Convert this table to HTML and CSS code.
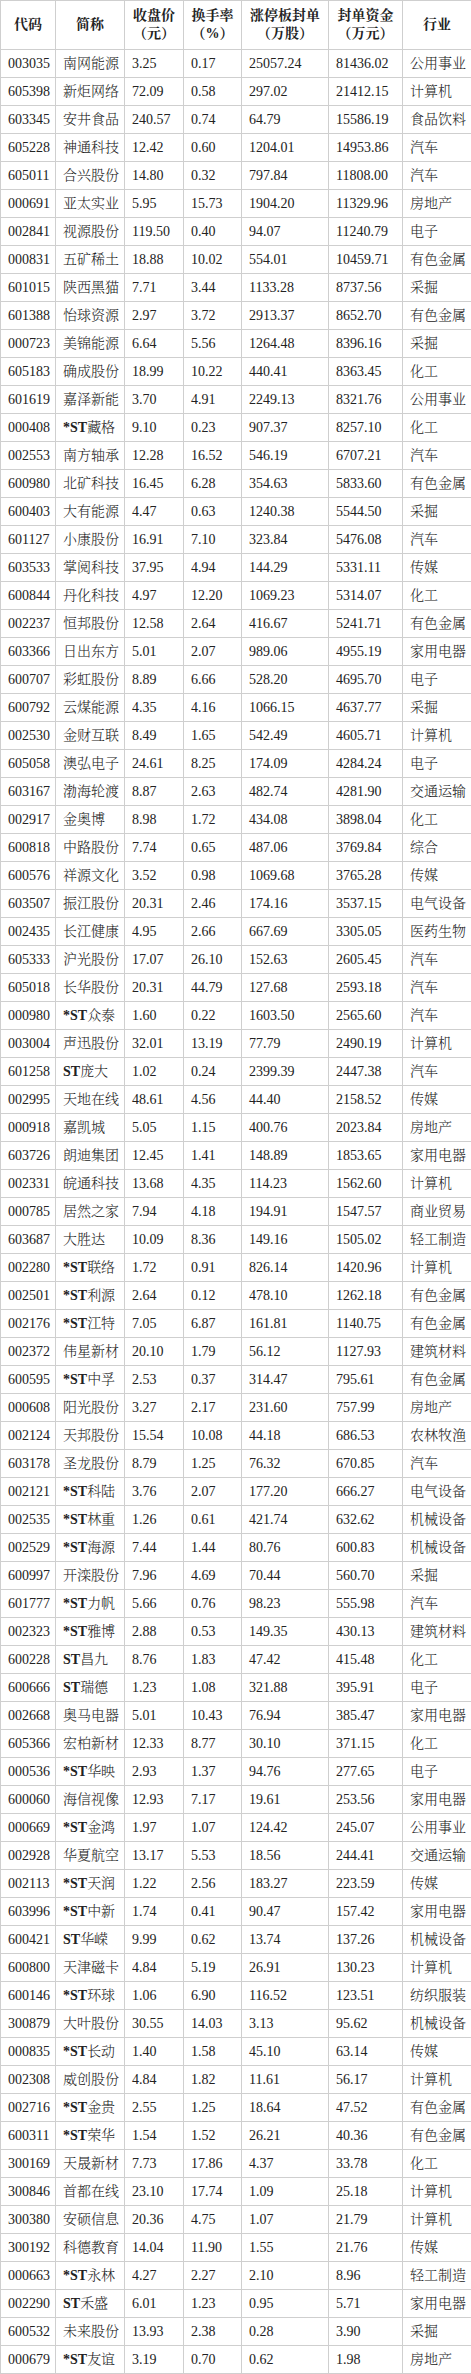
FILE: index.html
```html
<!DOCTYPE html>
<html lang="zh-CN">
<head>
<meta charset="utf-8">
<title>涨停板封单</title>
<link rel="stylesheet" href="styles.css">
</head>
<body>
<table class="grid">
<colgroup>
<col class="c-code"><col class="c-name"><col class="c-price"><col class="c-turn"><col class="c-seal"><col class="c-fund"><col class="c-ind">
</colgroup>
<thead>
<tr><th>代码</th><th>简称</th><th>收盘价<br>（元）</th><th>换手率<br>（%）</th><th>涨停板封单<br>（万股）</th><th>封单资金<br>（万元）</th><th>行业</th></tr>
</thead>
<tbody>
<tr><td>003035</td><td>南网能源</td><td>3.25</td><td>0.17</td><td>25057.24</td><td>81436.02</td><td>公用事业</td></tr>
<tr><td>605398</td><td>新炬网络</td><td>72.09</td><td>0.58</td><td>297.02</td><td>21412.15</td><td>计算机</td></tr>
<tr><td>603345</td><td>安井食品</td><td>240.57</td><td>0.74</td><td>64.79</td><td>15586.19</td><td>食品饮料</td></tr>
<tr><td>605228</td><td>神通科技</td><td>12.42</td><td>0.60</td><td>1204.01</td><td>14953.86</td><td>汽车</td></tr>
<tr><td>605011</td><td>合兴股份</td><td>14.80</td><td>0.32</td><td>797.84</td><td>11808.00</td><td>汽车</td></tr>
<tr><td>000691</td><td>亚太实业</td><td>5.95</td><td>15.73</td><td>1904.20</td><td>11329.96</td><td>房地产</td></tr>
<tr><td>002841</td><td>视源股份</td><td>119.50</td><td>0.40</td><td>94.07</td><td>11240.79</td><td>电子</td></tr>
<tr><td>000831</td><td>五矿稀土</td><td>18.88</td><td>10.02</td><td>554.01</td><td>10459.71</td><td>有色金属</td></tr>
<tr><td>601015</td><td>陕西黑猫</td><td>7.71</td><td>3.44</td><td>1133.28</td><td>8737.56</td><td>采掘</td></tr>
<tr><td>601388</td><td>怡球资源</td><td>2.97</td><td>3.72</td><td>2913.37</td><td>8652.70</td><td>有色金属</td></tr>
<tr><td>000723</td><td>美锦能源</td><td>6.64</td><td>5.56</td><td>1264.48</td><td>8396.16</td><td>采掘</td></tr>
<tr><td>605183</td><td>确成股份</td><td>18.99</td><td>10.22</td><td>440.41</td><td>8363.45</td><td>化工</td></tr>
<tr><td>601619</td><td>嘉泽新能</td><td>3.70</td><td>4.91</td><td>2249.13</td><td>8321.76</td><td>公用事业</td></tr>
<tr><td>000408</td><td><span class="st">*ST</span>藏格</td><td>9.10</td><td>0.23</td><td>907.37</td><td>8257.10</td><td>化工</td></tr>
<tr><td>002553</td><td>南方轴承</td><td>12.28</td><td>16.52</td><td>546.19</td><td>6707.21</td><td>汽车</td></tr>
<tr><td>600980</td><td>北矿科技</td><td>16.45</td><td>6.28</td><td>354.63</td><td>5833.60</td><td>有色金属</td></tr>
<tr><td>600403</td><td>大有能源</td><td>4.47</td><td>0.63</td><td>1240.38</td><td>5544.50</td><td>采掘</td></tr>
<tr><td>601127</td><td>小康股份</td><td>16.91</td><td>7.10</td><td>323.84</td><td>5476.08</td><td>汽车</td></tr>
<tr><td>603533</td><td>掌阅科技</td><td>37.95</td><td>4.94</td><td>144.29</td><td>5331.11</td><td>传媒</td></tr>
<tr><td>600844</td><td>丹化科技</td><td>4.97</td><td>12.20</td><td>1069.23</td><td>5314.07</td><td>化工</td></tr>
<tr><td>002237</td><td>恒邦股份</td><td>12.58</td><td>2.64</td><td>416.67</td><td>5241.71</td><td>有色金属</td></tr>
<tr><td>603366</td><td>日出东方</td><td>5.01</td><td>2.07</td><td>989.06</td><td>4955.19</td><td>家用电器</td></tr>
<tr><td>600707</td><td>彩虹股份</td><td>8.89</td><td>6.66</td><td>528.20</td><td>4695.70</td><td>电子</td></tr>
<tr><td>600792</td><td>云煤能源</td><td>4.35</td><td>4.16</td><td>1066.15</td><td>4637.77</td><td>采掘</td></tr>
<tr><td>002530</td><td>金财互联</td><td>8.49</td><td>1.65</td><td>542.49</td><td>4605.71</td><td>计算机</td></tr>
<tr><td>605058</td><td>澳弘电子</td><td>24.61</td><td>8.25</td><td>174.09</td><td>4284.24</td><td>电子</td></tr>
<tr><td>603167</td><td>渤海轮渡</td><td>8.87</td><td>2.63</td><td>482.74</td><td>4281.90</td><td>交通运输</td></tr>
<tr><td>002917</td><td>金奥博</td><td>8.98</td><td>1.72</td><td>434.08</td><td>3898.04</td><td>化工</td></tr>
<tr><td>600818</td><td>中路股份</td><td>7.74</td><td>0.65</td><td>487.06</td><td>3769.84</td><td>综合</td></tr>
<tr><td>600576</td><td>祥源文化</td><td>3.52</td><td>0.98</td><td>1069.68</td><td>3765.28</td><td>传媒</td></tr>
<tr><td>603507</td><td>振江股份</td><td>20.31</td><td>2.46</td><td>174.16</td><td>3537.15</td><td>电气设备</td></tr>
<tr><td>002435</td><td>长江健康</td><td>4.95</td><td>2.66</td><td>667.69</td><td>3305.05</td><td>医药生物</td></tr>
<tr><td>605333</td><td>沪光股份</td><td>17.07</td><td>26.10</td><td>152.63</td><td>2605.45</td><td>汽车</td></tr>
<tr><td>605018</td><td>长华股份</td><td>20.31</td><td>44.79</td><td>127.68</td><td>2593.18</td><td>汽车</td></tr>
<tr><td>000980</td><td><span class="st">*ST</span>众泰</td><td>1.60</td><td>0.22</td><td>1603.50</td><td>2565.60</td><td>汽车</td></tr>
<tr><td>003004</td><td>声迅股份</td><td>32.01</td><td>13.19</td><td>77.79</td><td>2490.19</td><td>计算机</td></tr>
<tr><td>601258</td><td><span class="st">ST</span>庞大</td><td>1.02</td><td>0.24</td><td>2399.39</td><td>2447.38</td><td>汽车</td></tr>
<tr><td>002995</td><td>天地在线</td><td>48.61</td><td>4.56</td><td>44.40</td><td>2158.52</td><td>传媒</td></tr>
<tr><td>000918</td><td>嘉凯城</td><td>5.05</td><td>1.15</td><td>400.76</td><td>2023.84</td><td>房地产</td></tr>
<tr><td>603726</td><td>朗迪集团</td><td>12.45</td><td>1.41</td><td>148.89</td><td>1853.65</td><td>家用电器</td></tr>
<tr><td>002331</td><td>皖通科技</td><td>13.68</td><td>4.35</td><td>114.23</td><td>1562.60</td><td>计算机</td></tr>
<tr><td>000785</td><td>居然之家</td><td>7.94</td><td>4.18</td><td>194.91</td><td>1547.57</td><td>商业贸易</td></tr>
<tr><td>603687</td><td>大胜达</td><td>10.09</td><td>8.36</td><td>149.16</td><td>1505.02</td><td>轻工制造</td></tr>
<tr><td>002280</td><td><span class="st">*ST</span>联络</td><td>1.72</td><td>0.91</td><td>826.14</td><td>1420.96</td><td>计算机</td></tr>
<tr><td>002501</td><td><span class="st">*ST</span>利源</td><td>2.64</td><td>0.12</td><td>478.10</td><td>1262.18</td><td>有色金属</td></tr>
<tr><td>002176</td><td><span class="st">*ST</span>江特</td><td>7.05</td><td>6.87</td><td>161.81</td><td>1140.75</td><td>有色金属</td></tr>
<tr><td>002372</td><td>伟星新材</td><td>20.10</td><td>1.79</td><td>56.12</td><td>1127.93</td><td>建筑材料</td></tr>
<tr><td>600595</td><td><span class="st">*ST</span>中孚</td><td>2.53</td><td>0.37</td><td>314.47</td><td>795.61</td><td>有色金属</td></tr>
<tr><td>000608</td><td>阳光股份</td><td>3.27</td><td>2.17</td><td>231.60</td><td>757.99</td><td>房地产</td></tr>
<tr><td>002124</td><td>天邦股份</td><td>15.54</td><td>10.08</td><td>44.18</td><td>686.53</td><td>农林牧渔</td></tr>
<tr><td>603178</td><td>圣龙股份</td><td>8.79</td><td>1.25</td><td>76.32</td><td>670.85</td><td>汽车</td></tr>
<tr><td>002121</td><td><span class="st">*ST</span>科陆</td><td>3.76</td><td>2.07</td><td>177.20</td><td>666.27</td><td>电气设备</td></tr>
<tr><td>002535</td><td><span class="st">*ST</span>林重</td><td>1.26</td><td>0.61</td><td>421.74</td><td>632.62</td><td>机械设备</td></tr>
<tr><td>002529</td><td><span class="st">*ST</span>海源</td><td>7.44</td><td>1.44</td><td>80.76</td><td>600.83</td><td>机械设备</td></tr>
<tr><td>600997</td><td>开滦股份</td><td>7.96</td><td>4.69</td><td>70.44</td><td>560.70</td><td>采掘</td></tr>
<tr><td>601777</td><td><span class="st">*ST</span>力帆</td><td>5.66</td><td>0.76</td><td>98.23</td><td>555.98</td><td>汽车</td></tr>
<tr><td>002323</td><td><span class="st">*ST</span>雅博</td><td>2.88</td><td>0.53</td><td>149.35</td><td>430.13</td><td>建筑材料</td></tr>
<tr><td>600228</td><td><span class="st">ST</span>昌九</td><td>8.76</td><td>1.83</td><td>47.42</td><td>415.48</td><td>化工</td></tr>
<tr><td>600666</td><td><span class="st">ST</span>瑞德</td><td>1.23</td><td>1.08</td><td>321.88</td><td>395.91</td><td>电子</td></tr>
<tr><td>002668</td><td>奥马电器</td><td>5.01</td><td>10.43</td><td>76.94</td><td>385.47</td><td>家用电器</td></tr>
<tr><td>605366</td><td>宏柏新材</td><td>12.33</td><td>8.77</td><td>30.10</td><td>371.15</td><td>化工</td></tr>
<tr><td>000536</td><td><span class="st">*ST</span>华映</td><td>2.93</td><td>1.37</td><td>94.76</td><td>277.65</td><td>电子</td></tr>
<tr><td>600060</td><td>海信视像</td><td>12.93</td><td>7.17</td><td>19.61</td><td>253.56</td><td>家用电器</td></tr>
<tr><td>000669</td><td><span class="st">*ST</span>金鸿</td><td>1.97</td><td>1.07</td><td>124.42</td><td>245.07</td><td>公用事业</td></tr>
<tr><td>002928</td><td>华夏航空</td><td>13.17</td><td>5.53</td><td>18.56</td><td>244.41</td><td>交通运输</td></tr>
<tr><td>002113</td><td><span class="st">*ST</span>天润</td><td>1.22</td><td>2.56</td><td>183.27</td><td>223.59</td><td>传媒</td></tr>
<tr><td>603996</td><td><span class="st">*ST</span>中新</td><td>1.74</td><td>0.41</td><td>90.47</td><td>157.42</td><td>家用电器</td></tr>
<tr><td>600421</td><td><span class="st">ST</span>华嵘</td><td>9.99</td><td>0.62</td><td>13.74</td><td>137.26</td><td>机械设备</td></tr>
<tr><td>600800</td><td>天津磁卡</td><td>4.84</td><td>5.19</td><td>26.91</td><td>130.23</td><td>计算机</td></tr>
<tr><td>600146</td><td><span class="st">*ST</span>环球</td><td>1.06</td><td>6.90</td><td>116.52</td><td>123.51</td><td>纺织服装</td></tr>
<tr><td>300879</td><td>大叶股份</td><td>30.55</td><td>14.03</td><td>3.13</td><td>95.62</td><td>机械设备</td></tr>
<tr><td>000835</td><td><span class="st">*ST</span>长动</td><td>1.40</td><td>1.58</td><td>45.10</td><td>63.14</td><td>传媒</td></tr>
<tr><td>002308</td><td>威创股份</td><td>4.84</td><td>1.82</td><td>11.61</td><td>56.17</td><td>计算机</td></tr>
<tr><td>002716</td><td><span class="st">*ST</span>金贵</td><td>2.55</td><td>1.25</td><td>18.64</td><td>47.52</td><td>有色金属</td></tr>
<tr><td>600311</td><td><span class="st">*ST</span>荣华</td><td>1.54</td><td>1.52</td><td>26.21</td><td>40.36</td><td>有色金属</td></tr>
<tr><td>300169</td><td>天晟新材</td><td>7.73</td><td>17.86</td><td>4.37</td><td>33.78</td><td>化工</td></tr>
<tr><td>300846</td><td>首都在线</td><td>23.10</td><td>17.74</td><td>1.09</td><td>25.18</td><td>计算机</td></tr>
<tr><td>300380</td><td>安硕信息</td><td>20.36</td><td>4.75</td><td>1.07</td><td>21.79</td><td>计算机</td></tr>
<tr><td>300192</td><td>科德教育</td><td>14.04</td><td>11.90</td><td>1.55</td><td>21.76</td><td>传媒</td></tr>
<tr><td>000663</td><td><span class="st">*ST</span>永林</td><td>4.27</td><td>2.27</td><td>2.10</td><td>8.96</td><td>轻工制造</td></tr>
<tr><td>002290</td><td><span class="st">ST</span>禾盛</td><td>6.01</td><td>1.23</td><td>0.95</td><td>5.71</td><td>家用电器</td></tr>
<tr><td>600532</td><td>未来股份</td><td>13.93</td><td>2.38</td><td>0.28</td><td>3.90</td><td>采掘</td></tr>
<tr><td>000679</td><td><span class="st">*ST</span>友谊</td><td>3.19</td><td>0.70</td><td>0.62</td><td>1.98</td><td>房地产</td></tr>
</tbody>
</table>
</body>
</html>
```

FILE: styles.css
```css
html, body {
  margin: 0;
  padding: 0;
  background: #ffffff;
}

body {
  font-family: "Liberation Serif", "Noto Serif CJK SC", "Noto Sans CJK SC", serif;
  font-size: 14px;
  color: #222222;
}

.grid {
  width: 471px;
  table-layout: fixed;
  border-collapse: collapse;
}

.c-code { width: 55px; }
.c-name { width: 69px; }
.c-price { width: 59px; }
.c-turn { width: 58px; }
.c-seal { width: 87px; }
.c-fund { width: 74px; }
.c-ind { width: 69px; }

.grid th,
.grid td {
  border: 1px solid #cfcfcf;
  white-space: nowrap;
  overflow: hidden;
}

.grid th {
  font-weight: bold;
  text-align: center;
  line-height: 18px;
  padding: 6px 2px;
  vertical-align: middle;
}

.grid td {
  font-weight: 300;
  text-align: left;
  line-height: 20px;
  padding: 4px 6px 3px 7px;
  vertical-align: middle;
}

.st {
  font-weight: bold;
}
```
